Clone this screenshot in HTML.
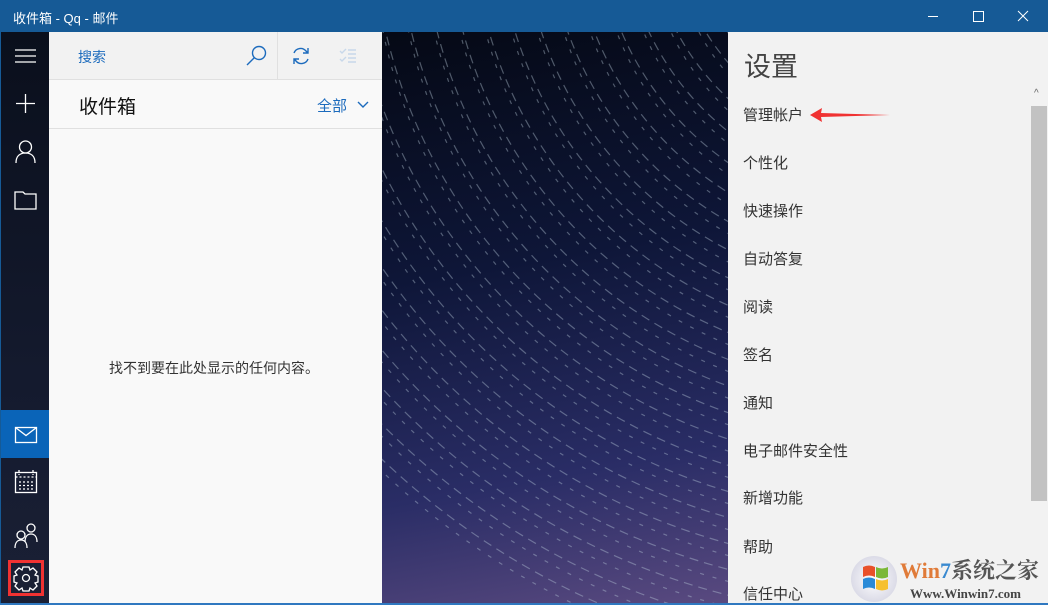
<!DOCTYPE html>
<html><head><meta charset="utf-8"><style>
*{margin:0;padding:0;box-sizing:border-box}
html{overflow:hidden}
body{width:1048px;height:605px;overflow:hidden;font-family:"Liberation Sans","Noto Sans CJK SC",sans-serif;background:#fff;position:relative}
.title{position:absolute;left:0;top:0;width:1048px;height:32px;background:#165a96;color:#fff;font-size:13px}
.title .t{position:absolute;left:13px;top:8px}
.nav{position:absolute;left:0;top:32px;width:49px;height:573px;background:linear-gradient(#0a0f1c,#141a2e 60%,#1a2035);border-left:1px solid #165a96;overflow:hidden}
.list{position:absolute;left:49px;top:32px;width:333px;height:573px;background:#f9f9f9;overflow:hidden}
.hdr{position:absolute;left:0;top:0;width:333px;height:48px;background:#f2f2f2;border-bottom:1px solid #e0e0e0}
.img{position:absolute;left:382px;top:32px;width:346px;height:573px;background:linear-gradient(170deg,#050915 0%,#0e1638 40%,#2a2d66 75%,#5a4a80 100%);overflow:hidden}
.set{position:absolute;left:728px;top:32px;width:320px;height:573px;background:#f2f2f2;overflow:hidden}
.set .h{position:absolute;left:16px;top:13px;font-size:27px;color:#444}
.set .i{position:absolute;left:15px;font-size:15px;color:#333;line-height:18px}
.sb{position:absolute;left:1031px;top:106px;width:16px;height:395px;background:#c2c2c2}
</style></head><body>
<div class="title"><span class="t">收件箱 - Qq - 邮件</span>
<svg style="position:absolute;left:920px;top:8px" width="120" height="16" fill="none" stroke="#fff" stroke-width="1"><line x1="8" y1="8.5" x2="18" y2="8.5"/><rect x="53.5" y="3.5" width="10" height="10"/><path d="M98 3L108 13M108 3L98 13"/></svg></div>
<div class="nav">
<svg width="49" height="573" fill="none" stroke="#fff" stroke-width="1.3">
<path d="M14 18h21M14 24h21M14 30h21"/><path d="M24.5 62v19M15 71.5h19"/>
<circle cx="24.5" cy="115" r="6"/><path d="M15 131c0-7 4-10 9.5-10s9.5 3 9.5 10"/>
<path d="M14 160h8l2 2h11v15H14z"/>
</svg>
<div style="position:absolute;left:0;top:378px;width:49px;height:48px;background:#0a64b8"></div>
<svg style="position:absolute;left:0;top:378px" width="49" height="195" fill="none" stroke="#fff" stroke-width="1.3">
<rect x="14.5" y="17.5" width="21" height="15"/><path d="M14.5 17.5l10.5 8 10.5-8"/>
<rect x="14.5" y="62.5" width="21" height="20"/><path d="M14.5 67h21M18 60v5M32 60v5M18 72h14M18 75.5h14M18 79h14" stroke-dasharray="2 2"/>
<circle cx="30" cy="118" r="4"/><path d="M24 132c0-6 3-8 6-8s6 2 6 8"/><circle cx="20" cy="125" r="4"/><path d="M14 138c0-6 3-8 6-8s6 2 6 8"/>
<circle cx="25" cy="168" r="3.5"/><path d="M22 157h6l1 3 3-2 4 4-2 3 3 1v6l-3 1 2 3-4 4-3-2-1 3h-6l-1-3-3 2-4-4 2-3-3-1v-6l3-1-2-3 4-4 3 2z"/>
</svg>
<div style="position:absolute;left:7px;top:528px;width:36px;height:36px;border:3px solid #f03232"></div>
</div>
<div class="list">
<div class="hdr"><span style="position:absolute;left:29px;top:15px;font-size:14px;color:#1c6bbd">搜索</span>
<div style="position:absolute;left:228px;top:0;width:1px;height:48px;background:#e0e0e0"></div>
<svg style="position:absolute;left:195px;top:12px" width="140" height="26" fill="none" stroke-width="1.4"><g stroke="#1c6bbd"><circle cx="15" cy="9" r="6.5"/><path d="M10.5 13.5L3 21"/><path d="M50 9a7 7 0 0 1 12-2l2 2M64 4v5h-5M64 15a7 7 0 0 1-12 2l-2-2M50 20v-5h5"/></g><path d="M96 7l2 2 4-4M96 15l2 2 4-4M104 6h8M104 10h8M104 14h8M104 18h8" stroke="#c8d8ea"/></svg></div>
<span style="position:absolute;left:30px;top:60px;font-size:19px;color:#111">收件箱</span>
<span style="position:absolute;left:268px;top:63px;font-size:15px;color:#1c6bbd">全部</span>
<svg style="position:absolute;left:307px;top:68px" width="14" height="10" fill="none" stroke="#1c6bbd" stroke-width="1.4"><path d="M2 2l5 5 5-5"/></svg>
<div style="position:absolute;left:0;top:96px;width:333px;height:1px;background:#e0e0e0"></div>
<span style="position:absolute;left:60px;top:326px;font-size:14px;color:#333">找不到要在此处显示的任何内容。</span>
</div>
<div class="img"><svg width="346" height="573" fill="none" stroke="#bcd" stroke-opacity=".4" stroke-width="1.2" stroke-dasharray="9 6">
<g id="g"><circle cx="520" cy="-120" r="180"/><circle cx="520" cy="-120" r="205"/><circle cx="520" cy="-120" r="230"/><circle cx="520" cy="-120" r="255"/><circle cx="520" cy="-120" r="280"/><circle cx="520" cy="-120" r="305"/><circle cx="520" cy="-120" r="330"/><circle cx="520" cy="-120" r="355"/><circle cx="520" cy="-120" r="380"/><circle cx="520" cy="-120" r="405"/><circle cx="520" cy="-120" r="430"/><circle cx="520" cy="-120" r="455"/><circle cx="520" cy="-120" r="480"/><circle cx="520" cy="-120" r="505"/><circle cx="520" cy="-120" r="530"/><circle cx="520" cy="-120" r="555"/><circle cx="520" cy="-120" r="580"/><circle cx="520" cy="-120" r="605"/><circle cx="520" cy="-120" r="630"/><circle cx="520" cy="-120" r="655"/><circle cx="520" cy="-120" r="680"/><circle cx="520" cy="-120" r="705"/><circle cx="520" cy="-120" r="730"/><circle cx="520" cy="-120" r="755"/></g>
<g stroke-dasharray="4 9" stroke-dashoffset="5" transform="translate(0,12)"><use href="#g"/></g></svg></div>
<div class="set"><span class="h">设置</span>
<span class="i" style="top:75px">管理帐户</span>
<svg style="position:absolute;left:80px;top:75px" width="85" height="16"><path d="M2 8L14 1l-1 5 69 2-69 2 1 5z" fill="#f03232"/></svg>
<span class="i" style="top:123px">个性化</span>
<span class="i" style="top:171px">快速操作</span>
<span class="i" style="top:219px">自动答复</span>
<span class="i" style="top:267px">阅读</span>
<span class="i" style="top:315px">签名</span>
<span class="i" style="top:363px">通知</span>
<span class="i" style="top:411px">电子邮件安全性</span>
<span class="i" style="top:458px">新增功能</span>
<span class="i" style="top:507px">帮助</span>
<span class="i" style="top:554px">信任中心</span>
<span style="position:absolute;left:306px;top:56px;font-size:10px;color:#666">^</span>
</div>
<div class="sb"></div>
<div style="position:absolute;left:851px;top:556px;width:46px;height:46px;border-radius:50%;background:radial-gradient(#fff,#ccd)"></div>
<svg style="position:absolute;left:861px;top:562px" width="28" height="32"><path d="M2 5q6-3 12 0v10q-6-3-12 0z" fill="#e8502a"/><path d="M15 5q6 3 12 0v10q-6 3-12 0z" fill="#7bb838"/><path d="M2 17q6-3 12 0v10q-6-3-12 0z" fill="#2a8ad8"/><path d="M15 17q6 3 12 0v10q-6 3-12 0z" fill="#f6c030"/></svg>
<span style="position:absolute;left:900px;top:558px;font-size:22px;line-height:26px;font-weight:bold;font-family:'Liberation Serif','Noto Serif CJK SC',serif;color:#e07b39">Win<span style="color:#3a8ad0">7</span><span style="color:#555">系统之家</span></span>
<span style="position:absolute;left:910px;top:586px;font-size:13px;line-height:15px;font-weight:bold;font-family:'Liberation Serif',serif;color:#444">Www.Winwin7.com</span>
<div style="position:absolute;left:0;top:603px;width:1048px;height:2px;background:#2f78c0"></div>
</body></html>
